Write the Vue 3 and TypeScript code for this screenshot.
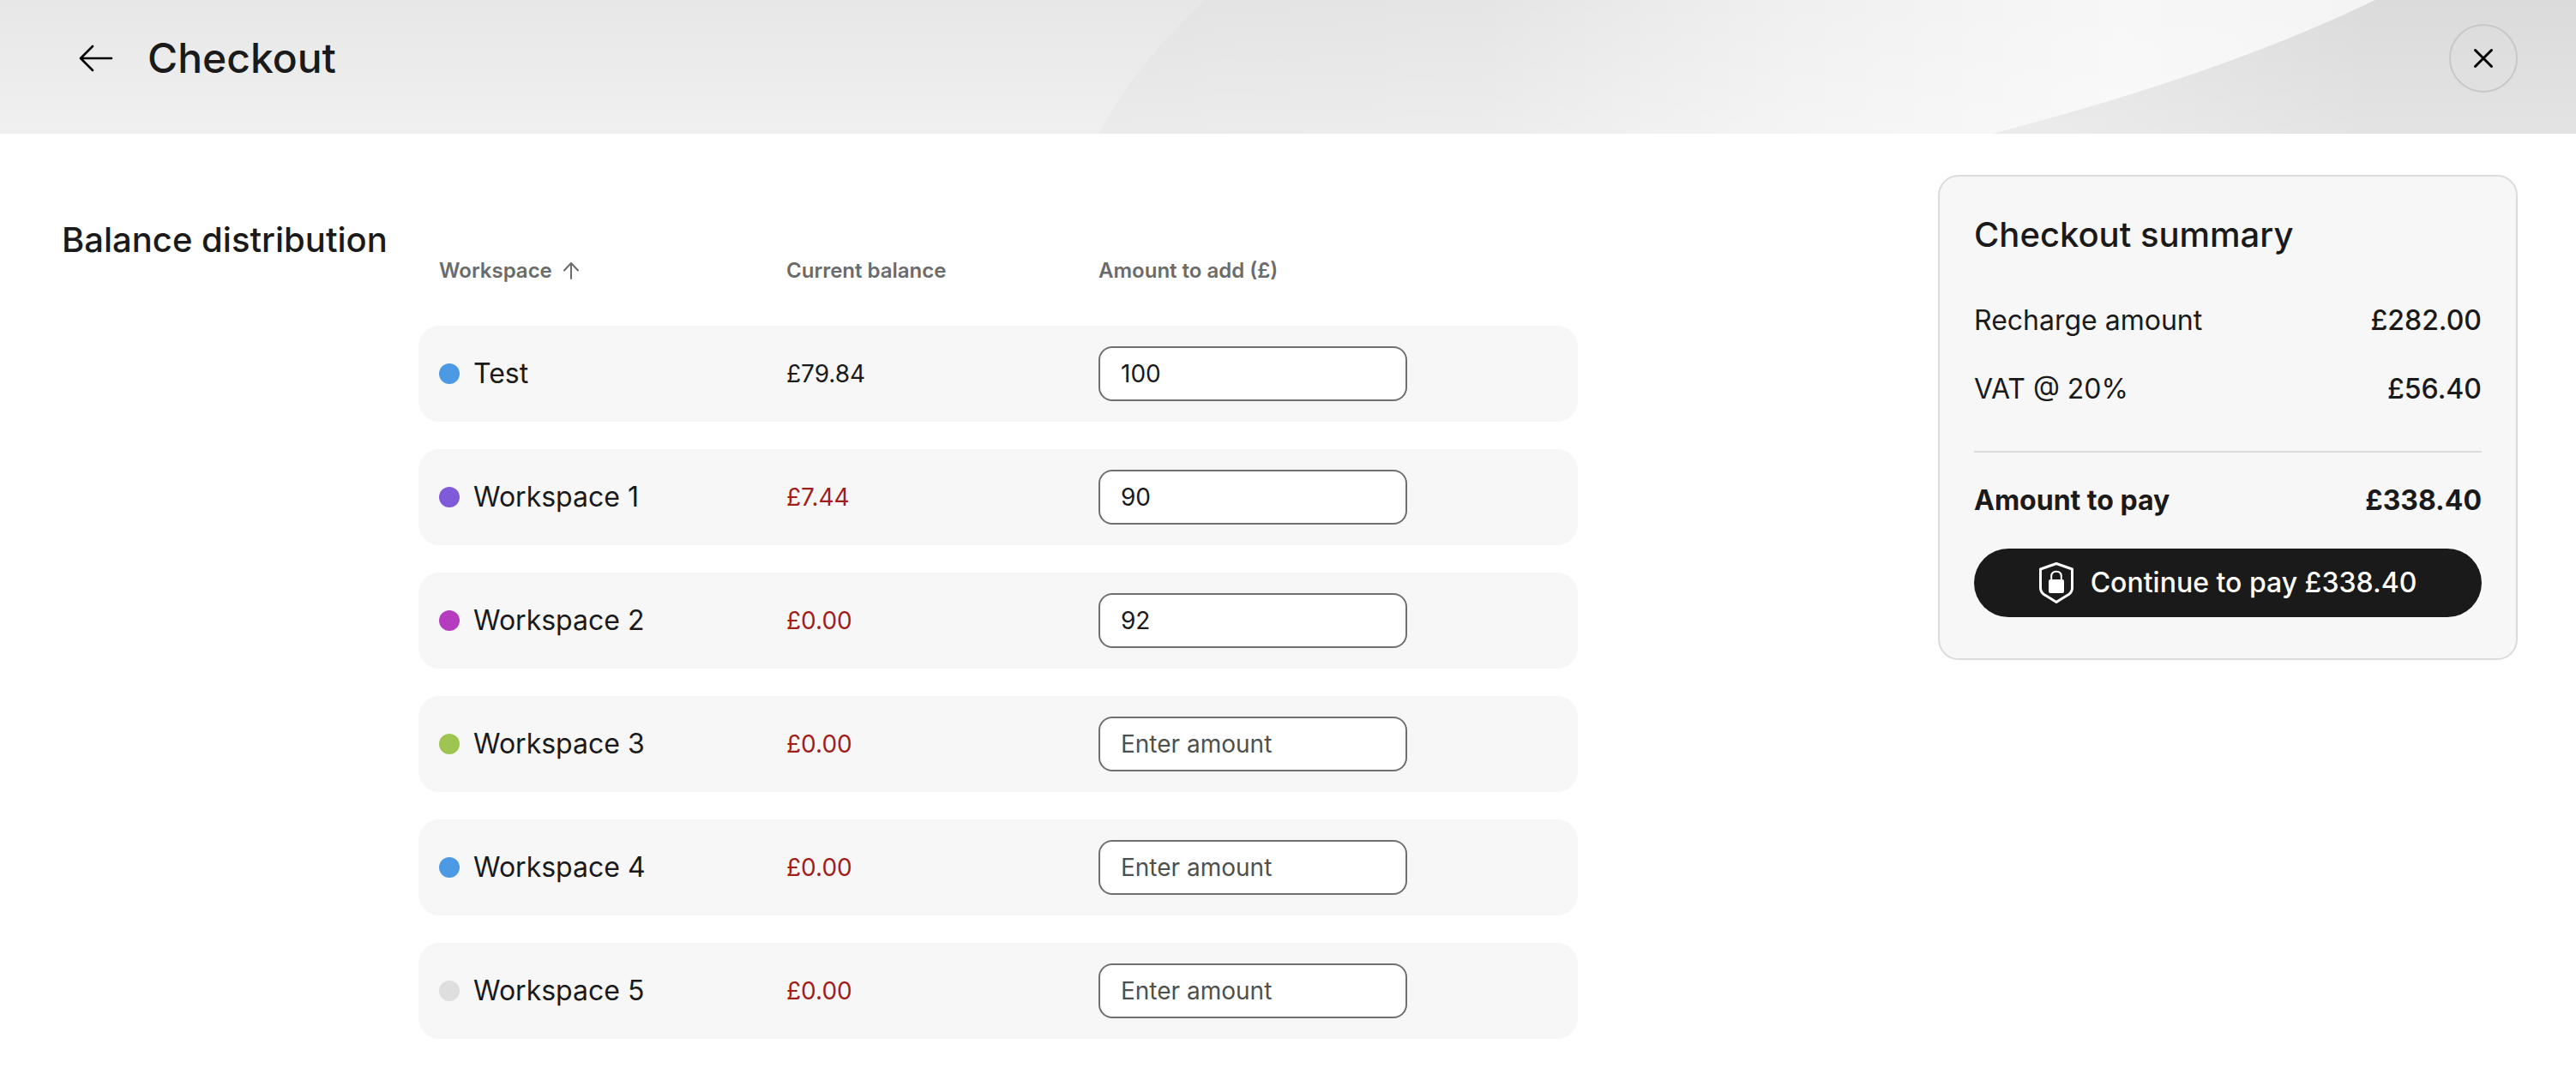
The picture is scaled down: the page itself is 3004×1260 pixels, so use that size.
<script setup lang="ts">
import { computed, ref } from 'vue'

interface Workspace {
  id: number
  name: string
  color: string
  balance: number
  amount: string
}

const LOW_BALANCE = 10
const VAT_RATE = 0.2

const workspaces = ref<Workspace[]>([
  { id: 1, name: 'Test', color: '#4c9ae4', balance: 79.84, amount: '100' },
  { id: 2, name: 'Workspace 1', color: '#805bd9', balance: 7.44, amount: '90' },
  { id: 3, name: 'Workspace 2', color: '#b53cbf', balance: 0, amount: '92' },
  { id: 4, name: 'Workspace 3', color: '#9ec552', balance: 0, amount: '' },
  { id: 5, name: 'Workspace 4', color: '#4c9ae4', balance: 0, amount: '' },
  { id: 6, name: 'Workspace 5', color: '#dedede', balance: 0, amount: '' },
])

const ascending = ref(true)
const rows = computed(() =>
  [...workspaces.value].sort((a, b) => a.name.localeCompare(b.name) * (ascending.value ? 1 : -1)),
)

const recharge = computed(() => workspaces.value.reduce((sum, w) => sum + (Number(w.amount) || 0), 0))
const vat = computed(() => recharge.value * VAT_RATE)
const total = computed(() => recharge.value + vat.value)

const money = (value: number): string => `£${value.toFixed(2)}`
</script>

<template>
  <div class="page">
    <header class="header">
      <svg class="backdrop" viewBox="0 0 3004 156" preserveAspectRatio="none" aria-hidden="true">
        <defs>
          <linearGradient id="base" x1="0" y1="0" x2="0" y2="1">
            <stop offset="0" stop-color="#e7e7e7" />
            <stop offset="1" stop-color="#f0f0f0" />
          </linearGradient>
          <linearGradient id="sheet" gradientUnits="userSpaceOnUse" x1="1281" y1="0" x2="2770" y2="0">
            <stop offset="0" stop-color="#e3e3e3" />
            <stop offset="0.3" stop-color="#e5e5e5" />
            <stop offset="0.55" stop-color="#f0f0f0" />
            <stop offset="0.8" stop-color="#f7f7f7" />
            <stop offset="1" stop-color="#f4f4f4" />
          </linearGradient>
          <linearGradient id="lift" x1="0" y1="0" x2="0" y2="1">
            <stop offset="0" stop-color="#fff" stop-opacity="0" />
            <stop offset="1" stop-color="#fff" stop-opacity="0.3" />
          </linearGradient>
          <linearGradient id="corner" gradientUnits="userSpaceOnUse" x1="2400" y1="0" x2="2760" y2="0">
            <stop offset="0" stop-color="#e5e5e5" />
            <stop offset="1" stop-color="#dbdbdb" />
          </linearGradient>
          <linearGradient id="corner-lift" x1="0" y1="0" x2="0" y2="1">
            <stop offset="0" stop-color="#fff" stop-opacity="0" />
            <stop offset="1" stop-color="#fff" stop-opacity="0.24" />
          </linearGradient>
        </defs>
        <rect width="3004" height="156" fill="url(#base)" />
        <path d="M1405 0Q1322 78 1281 156H2324Q2593 86 2770 0Z" fill="url(#sheet)" />
        <path d="M1405 0Q1322 78 1281 156H2324Q2593 86 2770 0Z" fill="url(#lift)" />
        <path d="M2770 0Q2593 86 2324 156H3004V0Z" fill="url(#corner)" />
        <path d="M2770 0Q2593 86 2324 156H3004V0Z" fill="url(#corner-lift)" />
      </svg>
      <button class="back" type="button" aria-label="Back">
        <svg width="40" height="32" viewBox="0 0 40 32" fill="none" stroke="#000" stroke-width="2.6" stroke-linecap="round" stroke-linejoin="round">
          <path d="M38 16H2M16 2L2 16L16 30" />
        </svg>
      </button>
      <h1 class="title">Checkout</h1>
      <button class="close" type="button" aria-label="Close">
        <svg width="24" height="24" viewBox="0 0 24 24" fill="none" stroke="#000" stroke-width="3" stroke-linecap="round">
          <path d="M2.5 2.5L21.5 21.5M21.5 2.5L2.5 21.5" />
        </svg>
      </button>
    </header>

    <main class="main">
      <section class="distribution" aria-labelledby="distribution-title">
        <h2 id="distribution-title" class="heading">Balance distribution</h2>
        <table class="table">
          <colgroup>
            <col class="col-name" />
            <col class="col-balance" />
            <col />
          </colgroup>
          <thead>
            <tr>
              <th scope="col">
                <button class="sort" type="button" @click="ascending = !ascending">
                  Workspace
                  <svg width="20" height="20" viewBox="0 0 20 20" fill="none" stroke="currentColor" stroke-width="2" stroke-linecap="round" stroke-linejoin="round">
                    <path d="M10 19V1M2 9.5L10 1L18 9.5" />
                  </svg>
                </button>
              </th>
              <th scope="col">Current balance</th>
              <th scope="col">Amount to add (£)</th>
            </tr>
          </thead>
          <tbody>
            <tr v-for="w in rows" :key="w.id">
              <td>
                <label class="name" :for="`amount-${w.id}`">
                  <span class="dot" :style="{ backgroundColor: w.color }"></span>
                  {{ w.name }}
                </label>
              </td>
              <td class="balance" :class="{ low: w.balance < LOW_BALANCE }">{{ money(w.balance) }}</td>
              <td>
                <input :id="`amount-${w.id}`" v-model="w.amount" class="amount" type="text" inputmode="decimal" placeholder="Enter amount" />
              </td>
            </tr>
          </tbody>
        </table>
      </section>

      <aside class="summary" aria-labelledby="summary-title">
        <h2 id="summary-title" class="heading">Checkout summary</h2>
        <dl class="lines">
          <div class="line">
            <dt>Recharge amount</dt>
            <dd>{{ money(recharge) }}</dd>
          </div>
          <div class="line">
            <dt>VAT @ 20%</dt>
            <dd>{{ money(vat) }}</dd>
          </div>
          <div class="line total">
            <dt>Amount to pay</dt>
            <dd>{{ money(total) }}</dd>
          </div>
        </dl>
        <button class="pay" type="button">
          <svg width="40" height="48" viewBox="0 0 40 48" fill="none" aria-hidden="true">
            <path d="M20 1.5L38.5 8V30C38.5 33.500 37 35.500 34.500 37.500Q27 42 20 46.500Q13 42 5.500 37.500C3 35.500 1.5 33.500 1.5 30V8Z" stroke="#fff" stroke-width="3" stroke-linejoin="round" />
            <path d="M14.2 21V16.500C14.200 13 16.500 10.800 20 10.800S25.800 13 25.800 16.500V21" stroke="#fff" stroke-width="2" />
            <rect x="11" y="20" width="18" height="16" rx="2" fill="#fff" />
          </svg>
          Continue to pay {{ money(total) }}
        </button>
      </aside>
    </main>
  </div>
</template>

<style>
body {
  margin: 0;
  background: #fff;
}
</style>

<style scoped>
.page {
  font-family: Inter, 'Liberation Sans', sans-serif;
  font-size: 32px;
  line-height: 48px;
  color: #1a1a1a;
}

button,
input {
  font: inherit;
  color: inherit;
}

button {
  padding: 0;
  border: 0;
  background: none;
  cursor: pointer;
}

h1,
h2,
dl,
dd {
  margin: 0;
}

.header {
  position: relative;
  display: flex;
  align-items: center;
  padding: 28px 68px 48px 92px;
}

.backdrop {
  position: absolute;
  inset: 0;
  width: 100%;
  height: 100%;
}

.back,
.title,
.close {
  position: relative;
}

.back {
  display: flex;
}

.title {
  margin-left: 40px;
  font-size: 48px;
  line-height: 64px;
  font-weight: 500;
}

.close {
  display: flex;
  align-items: center;
  justify-content: center;
  box-sizing: border-box;
  width: 80px;
  height: 80px;
  margin-left: auto;
  border: 2px solid #c8c8c8;
  border-radius: 50%;
}

.main {
  display: flex;
  align-items: flex-start;
  justify-content: space-between;
  gap: 48px;
  padding: 48px 68px 16px 72px;
}

.distribution {
  display: grid;
  grid-template-columns: 416px minmax(0, 1352px);
  flex: 1;
  align-items: start;
  padding-top: 48px;
}

.heading {
  font-size: 40px;
  line-height: 56px;
  font-weight: 500;
}

.table {
  width: 100%;
  table-layout: fixed;
  border-collapse: separate;
  border-spacing: 0 32px;
}

.col-name {
  width: 405px;
}

.col-balance {
  width: 364px;
}

th {
  height: 64px;
  padding: 0 24px;
  font-size: 24px;
  line-height: 32px;
  font-weight: 600;
  text-align: left;
  color: #6b6b6b;
}

.sort {
  display: flex;
  align-items: center;
  gap: 12px;
}

td {
  padding: 24px;
  background: #f7f7f7;
}

td:first-child {
  border-radius: 24px 0 0 24px;
}

td:last-child {
  border-radius: 0 24px 24px 0;
}

.name {
  display: flex;
  align-items: center;
  gap: 16px;
}

.dot {
  width: 24px;
  height: 24px;
  border-radius: 50%;
}

.balance {
  font-size: 28px;
}

.low {
  color: #9e1f1b;
}

.amount {
  display: block;
  box-sizing: border-box;
  width: 360px;
  height: 64px;
  padding: 0 24px;
  border: 2px solid #707070;
  border-radius: 16px;
  background: #fff;
  font-size: 28px;
}

.amount::placeholder {
  color: #4f4f4f;
  opacity: 1;
}

.summary {
  box-sizing: border-box;
  width: 676px;
  padding: 40px 40px 48px;
  border: 2px solid #dcdcdc;
  border-radius: 24px;
  background: #f7f7f7;
}

.lines {
  display: flex;
  flex-direction: column;
  gap: 32px;
  padding: 48px 0 32px;
}

.line {
  display: flex;
  justify-content: space-between;
}

.line dd {
  font-weight: 500;
}

.total {
  margin-top: 16px;
  padding-top: 32px;
  border-top: 2px solid #dcdcdc;
}

.total dt,
.total dd {
  font-weight: 700;
}

.pay {
  display: flex;
  align-items: center;
  justify-content: center;
  gap: 20px;
  width: 100%;
  height: 80px;
  border-radius: 40px;
  background: #1a1a1a;
  font-weight: 500;
  color: #fff;
}
</style>
